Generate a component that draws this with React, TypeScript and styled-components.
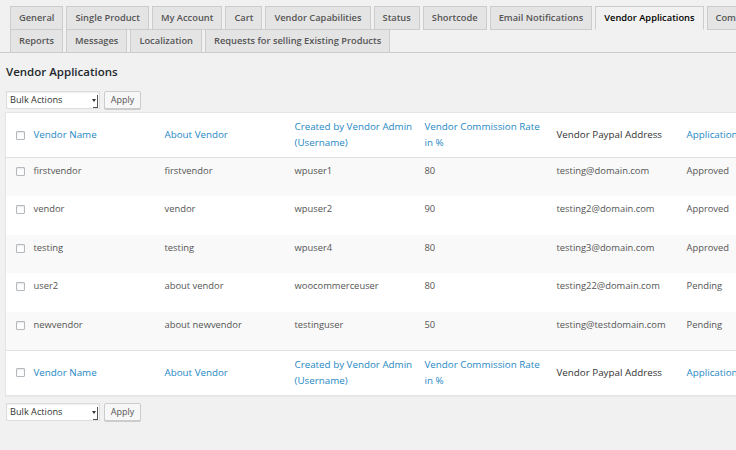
import React from "react";
import styled, { createGlobalStyle } from "styled-components";

const Global = createGlobalStyle`
  html, body { margin: 0; padding: 0; background: #f1f1f1; overflow: hidden; }
  body { font-family: "Open Sans", "Liberation Sans", sans-serif; color: #444; width: 736px; height: 450px; }
`;

const Page = styled.div`
  padding: 0 0 0 5px;
  width: 900px;
`;

const TabWrapper = styled.nav`
  display: flex;
  flex-wrap: wrap;
  padding: 6px 0 0 10px;
  border-bottom: 1px solid #ccc;
  width: 900px;
`;

const Tab = styled.a<{ $active?: boolean }>`
  display: flex;
  align-items: center;
  height: 24px;
  box-sizing: border-box;
  padding: 0 8px;
  margin: 0 3px -1px 0;
  font-size: 9.3px;
  font-weight: 600;
  line-height: 1;
  white-space: nowrap;
  border: 1px solid #ccc;
  background: ${(p) => (p.$active ? "#f1f1f1" : "#e4e4e4")};
  border-bottom-color: ${(p) => (p.$active ? "#f1f1f1" : "#ccc")};
  color: ${(p) => (p.$active ? "#000" : "#555")};
`;

const RowBreak = styled.div`
  flex-basis: 100%;
  height: 0;
`;

const Heading = styled.h2`
  margin: 11px 0 0 1px;
  font-size: 11.5px;
  font-weight: 600;
  color: #23282d;
  line-height: 16px;
`;

const TableNav = styled.div<{ $top?: boolean }>`
  display: flex;
  align-items: center;
  gap: 4px;
  margin: ${(p) => (p.$top ? "11px 0 3px 1px" : "7px 0 0 1px")};
  height: 18px;
`;

const SelectBox = styled.div`
  position: relative;
  width: 94px;
  height: 18px;
  box-sizing: border-box;
  background: #fff;
  border: 1px solid #ddd;
  box-shadow: inset 0 1px 2px rgba(0, 0, 0, 0.07);
  font-size: 9.2px;
  color: #333;
  line-height: 16px;
  padding-left: 3px;
`;

const SelectArrow = styled.span`
  position: absolute;
  right: 1px;
  top: 3px;
  width: 4px;
  height: 12px;
  border-right: 1px solid #555;
  border-bottom: 1px solid #555;
  &::before {
    content: "";
    position: absolute;
    left: -1px;
    top: 4px;
    border-left: 2px solid transparent;
    border-right: 2px solid transparent;
    border-top: 3px solid #333;
  }
`;

const Button = styled.button`
  height: 18px;
  box-sizing: border-box;
  width: 37px;
  padding: 0;
  background: #f7f7f7;
  border: 1px solid #ccc;
  border-radius: 2px;
  box-shadow: 0 1px 0 #ccc;
  font-family: inherit;
  font-size: 9px;
  color: #555;
  line-height: 16px;
`;

const Table = styled.table`
  border-collapse: collapse;
  table-layout: fixed;
  width: 834px;
  background: #fff;
  border: 1px solid #e5e5e5;
  box-shadow: 0 1px 1px rgba(0, 0, 0, 0.04);
`;

const Th = styled.th<{ $link?: boolean }>`
  text-align: left;
  font-weight: 400;
  font-size: 9.8px;
  line-height: 16px;
  padding: 6px 8px;
  height: 45px;
  box-sizing: border-box;
  white-space: nowrap;
  overflow: hidden;
  color: ${(p) => (p.$link ? "#2688c4" : "#333")};
  vertical-align: middle;
`;

const HeadRow = styled.tr<{ $foot?: boolean }>`
  border-top: ${(p) => (p.$foot ? "1px solid #e1e1e1" : "none")};
  border-bottom: ${(p) => (p.$foot ? "none" : "1px solid #e1e1e1")};
`;

const BodyRow = styled.tr<{ $alt?: boolean }>`
  background: ${(p) => (p.$alt ? "#f9f9f9" : "#fff")};
  height: 38.5px;
`;

const Td = styled.td`
  font-size: 9.4px;
  line-height: 16px;
  color: #555;
  padding: 5px 8px;
  vertical-align: top;
  white-space: nowrap;
  overflow: hidden;
`;

const CheckCell = styled.td`
  padding: 5px 0 0 10px;
  vertical-align: top;
`;

const CheckHead = styled.th`
  padding: 0 0 0 10px;
  vertical-align: middle;
  text-align: left;
`;

const Check = styled.span<{ $head?: boolean }>`
  display: block;
  width: 7px;
  height: 7px;
  margin-top: ${(p) => (p.$head ? "0" : "4px")};
  border: 1px solid #b4b9be;
  border-radius: 1px;
  background: #fff;
  box-shadow: inset 0 1px 2px rgba(0, 0, 0, 0.1);
`;

const tabs1 = [
  "General",
  "Single Product",
  "My Account",
  "Cart",
  "Vendor Capabilities",
  "Status",
  "Shortcode",
  "Email Notifications",
  "Vendor Applications",
  "Commission",
];
const tabs2 = ["Reports", "Messages", "Localization", "Requests for selling Existing Products"];

const rows = [
  ["firstvendor", "firstvendor", "wpuser1", "80", "testing@domain.com", "Approved"],
  ["vendor", "vendor", "wpuser2", "90", "testing2@domain.com", "Approved"],
  ["testing", "testing", "wpuser4", "80", "testing3@domain.com", "Approved"],
  ["user2", "about vendor", "woocommerceuser", "80", "testing22@domain.com", "Pending"],
  ["newvendor", "about newvendor", "testinguser", "50", "testing@testdomain.com", "Pending"],
];

const HeaderCells: React.FC = () => (
  <>
    <CheckHead>
      <Check $head />
    </CheckHead>
    <Th $link>Vendor Name</Th>
    <Th $link>About Vendor</Th>
    <Th $link>
      Created by Vendor Admin
      <br />
      (Username)
    </Th>
    <Th $link>
      Vendor Commission Rate
      <br />
      in %
    </Th>
    <Th>Vendor Paypal Address</Th>
    <Th $link>Application Status</Th>
  </>
);

const Actions: React.FC<{ top?: boolean }> = ({ top }) => (
  <TableNav $top={top}>
    <SelectBox>
      Bulk Actions
      <SelectArrow />
    </SelectBox>
    <Button>Apply</Button>
  </TableNav>
);

export default function App() {
  return (
    <>
      <Global />
      <TabWrapper>
        {tabs1.map((t) => (
          <Tab key={t} $active={t === "Vendor Applications"}>
            {t}
          </Tab>
        ))}
        <RowBreak />
        {tabs2.map((t) => (
          <Tab key={t}>{t}</Tab>
        ))}
      </TabWrapper>
      <Page>
        <Heading>Vendor Applications</Heading>
        <Actions top />
        <Table>
          <colgroup>
            <col style={{ width: 20 }} />
            <col style={{ width: 131 }} />
            <col style={{ width: 130 }} />
            <col style={{ width: 130 }} />
            <col style={{ width: 132 }} />
            <col style={{ width: 130 }} />
            <col style={{ width: 161 }} />
          </colgroup>
          <thead>
            <HeadRow>
              <HeaderCells />
            </HeadRow>
          </thead>
          <tbody>
            {rows.map((r, i) => (
              <BodyRow key={i} $alt={i % 2 === 0}>
                <CheckCell>
                  <Check />
                </CheckCell>
                {r.map((c, j) => (
                  <Td key={j}>{c}</Td>
                ))}
              </BodyRow>
            ))}
          </tbody>
          <tfoot>
            <HeadRow $foot>
              <HeaderCells />
            </HeadRow>
          </tfoot>
        </Table>
        <Actions />
      </Page>
    </>
  );
}
